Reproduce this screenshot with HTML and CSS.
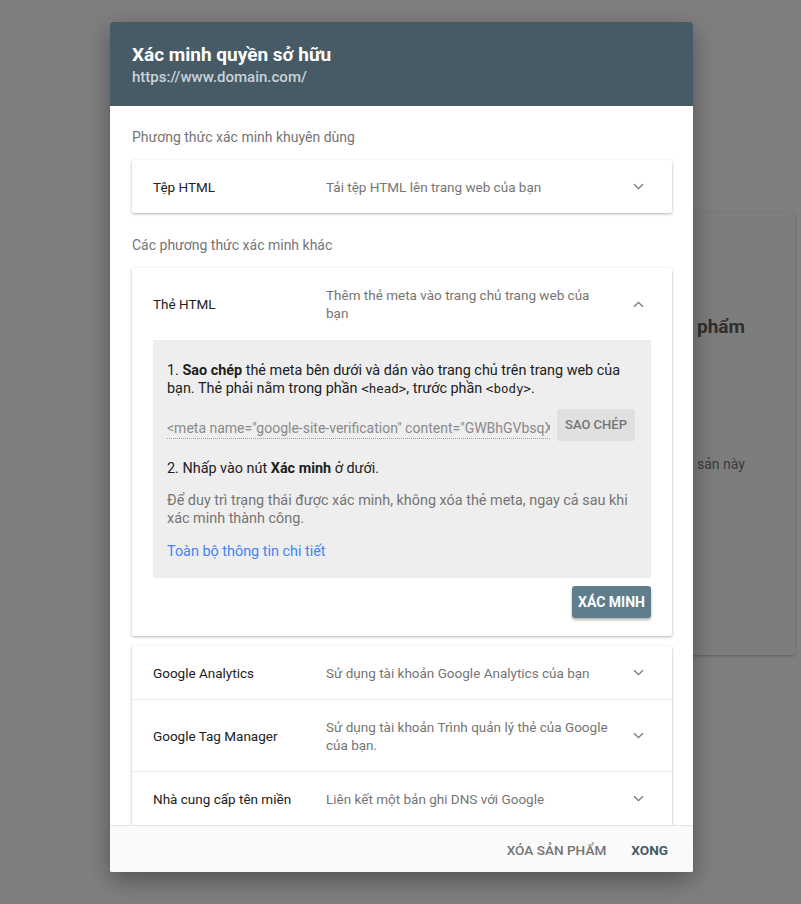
FILE: index.html
```html
<!DOCTYPE html>
<html lang="vi">
<head>
    <meta charset="UTF-8">
    <meta name="viewport" content="width=device-width, initial-scale=1.0">
    <title>Xác minh quyền sở hữu</title>
    <link rel="stylesheet" href="styles.css">
</head>
<body>
    <div class="page">
        <div class="bg-card">
            <div class="bg-title">phẩm</div>
            <div class="bg-text">sản này</div>
        </div>
    </div>

    <div class="dialog">
        <div class="dialog-header">
            <h1>Xác minh quyền sở hữu</h1>
            <div class="url">https://www.domain.com/</div>
        </div>

        <div class="dialog-body">
            <div class="section-label">Phương thức xác minh khuyên dùng</div>
            <div class="card">
                <div class="row">
                    <div class="row-title">Tệp HTML</div>
                    <div class="row-desc">Tải tệp HTML lên trang web của bạn</div>
                    <svg class="chev" viewBox="0 0 12 8"><path d="M1 1.5l5 5 5-5" /></svg>
                </div>
            </div>

            <div class="section-label">Các phương thức xác minh khác</div>
            <div class="card">
                <div class="row row-open">
                    <div class="row-title">Thẻ HTML</div>
                    <div class="row-desc">Thêm thẻ meta vào trang chủ trang web của bạn</div>
                    <svg class="chev" viewBox="0 0 12 8"><path d="M1 6.5l5-5 5 5" /></svg>
                </div>
                <div class="panel">
                    <p class="step">1. <b>Sao chép</b> thẻ meta bên dưới và dán vào trang chủ trên trang web của bạn. Thẻ phải nằm trong phần <code>&lt;head&gt;</code>, trước phần <code>&lt;body&gt;</code>.</p>
                    <div class="copy-row">
                        <div class="meta-input">&lt;meta name="google-site-verification" content="GWBhGVbsqX2bX0nY1k" /&gt;</div>
                        <button class="copy-btn">SAO CHÉP</button>
                    </div>
                    <p class="step">2. Nhấp vào nút <b>Xác minh</b> ở dưới.</p>
                    <p class="note">Để duy trì trạng thái được xác minh, không xóa thẻ meta, ngay cả sau khi xác minh thành công.</p>
                    <a class="link" href="#">Toàn bộ thông tin chi tiết</a>
                </div>
                <div class="verify-bar">
                    <button class="verify-btn">XÁC MINH</button>
                </div>
            </div>

            <div class="card card-list">
                <div class="row">
                    <div class="row-title">Google Analytics</div>
                    <div class="row-desc">Sử dụng tài khoản Google Analytics của bạn</div>
                    <svg class="chev" viewBox="0 0 12 8"><path d="M1 1.5l5 5 5-5" /></svg>
                </div>
                <div class="row">
                    <div class="row-title">Google Tag Manager</div>
                    <div class="row-desc">Sử dụng tài khoản Trình quản lý thẻ của Google của bạn.</div>
                    <svg class="chev" viewBox="0 0 12 8"><path d="M1 1.5l5 5 5-5" /></svg>
                </div>
                <div class="row">
                    <div class="row-title">Nhà cung cấp tên miền</div>
                    <div class="row-desc">Liên kết một bản ghi DNS với Google</div>
                    <svg class="chev" viewBox="0 0 12 8"><path d="M1 1.5l5 5 5-5" /></svg>
                </div>
                <div class="row">
                    <div class="row-title">Google Sites</div>
                    <div class="row-desc">Sử dụng Google Sites của bạn</div>
                    <svg class="chev" viewBox="0 0 12 8"><path d="M1 1.5l5 5 5-5" /></svg>
                </div>
            </div>
        </div>

        <div class="dialog-footer">
            <button class="text-btn">XÓA SẢN PHẨM</button>
            <button class="text-btn primary">XONG</button>
        </div>
    </div>
</body>
</html>
```

FILE: styles.css
```css
html, body {
    margin: 0;
    height: 100%;
}
body {
    font-family: Roboto, 'Noto Sans', Arial, sans-serif;
    background-color: #7f7f7f;
    overflow: hidden;
}
.page {
    height: 100%;
    padding-top: 212px;
    box-sizing: border-box;
}
.bg-card {
    margin-left: 600px;
    width: 195px;
    height: 443px;
    background-color: #7d7d7d;
    border-radius: 2px;
    box-shadow: 0 1px 3px rgba(0, 0, 0, 0.25);
    padding-left: 97px;
    box-sizing: border-box;
}
.bg-title {
    padding-top: 103px;
    font-size: 19px;
    font-weight: 700;
    color: #2f2f2f;
}
.bg-text {
    margin-top: 118px;
    font-size: 14px;
    color: #3a3a3a;
}

/* dialog */
.dialog {
    position: absolute;
    left: 110px;
    top: 22px;
    width: 583px;
    height: 850px;
    background: #fff;
    display: flex;
    flex-direction: column;
    border-radius: 2px;
    overflow: hidden;
    box-shadow: 0 8px 24px rgba(0, 0, 0, 0.35);
}
.dialog-header {
    background-color: #475b66;
    height: 84px;
    box-sizing: border-box;
    padding: 21px 22px 0;
}
.dialog-header h1 {
    margin: 0;
    font-size: 19px;
    line-height: 24px;
    font-weight: 700;
    color: #fff;
}
.url {
    font-size: 15px;
    font-weight: 500;
    line-height: 18px;
    margin-top: 1px;
    color: #c9d2d7;
}
.dialog-body {
    flex: 1;
    overflow: hidden;
    padding: 20px 21px 0 22px;
}
.section-label {
    font-size: 14px;
    line-height: 22px;
    color: #757575;
    margin-bottom: 12px;
}
.card {
    background: #fff;
    border-radius: 2px;
    box-shadow: 0 1px 3px rgba(0, 0, 0, 0.3);
    margin-bottom: 21px;
}
.card-list {
    margin-top: -11px;
}
.row {
    display: flex;
    align-items: center;
    min-height: 53px;
    padding: 0 27px 0 21px;
    font-size: 13.5px;
    border-top: 1px solid #ececec;
}
.row:first-child {
    border-top: none;
}
.card-list .row:nth-child(2) {
    min-height: 71px;
}
.row-open {
    min-height: 72px;
}
.row-title {
    width: 173px;
    flex-shrink: 0;
    color: #212121;
}
.row-desc {
    width: 282px;
    color: #757575;
    line-height: 18px;
}
.chev {
    width: 11px;
    height: 7px;
    margin-left: auto;
    margin-right: 1px;
    fill: none;
    stroke: #757575;
    stroke-width: 1.5;
}

/* expanded panel */
.panel {
    margin: 0 21px;
    background-color: #eeeeee;
    padding: 22px 15px 17px 14px;
    font-size: 14.4px;
    line-height: 18px;
    color: #212121;
}
.step {
    margin: 0;
}
.step b {
    font-weight: 700;
}
code {
    font-family: 'DejaVu Sans Mono', 'Liberation Mono', monospace;
    font-size: 12.5px;
}
.copy-row {
    display: flex;
    align-items: center;
    margin: 11px 0 19px;
}
.meta-input {
    width: 383px;
    white-space: nowrap;
    overflow: hidden;
    color: #8a8a8a;
    font-size: 14px;
    line-height: 20px;
    padding-top: 7px;
    padding-bottom: 0;
    border-bottom: 1px dotted #9e9e9e;
}
.copy-btn {
    margin-left: 7px;
    width: 78px;
    height: 32px;
    border: none;
    border-radius: 2px;
    background-color: #e0e0e0;
    color: #757575;
    font-family: inherit;
    font-size: 13px;
    line-height: 20px;
    font-weight: 500;
    padding: 0;
}
.note {
    margin: 14px 0 0;
    color: #757575;
}
.link {
    display: block;
    margin-top: 15px;
    color: #4285f4;
    text-decoration: none;
}
.verify-bar {
    display: flex;
    justify-content: flex-end;
    padding: 8px 21px 18px;
}
.verify-btn {
    width: 79px;
    height: 32px;
    border: none;
    border-radius: 3px;
    background-color: #607d8b;
    color: #fff;
    font-family: inherit;
    font-size: 14px;
    line-height: 20px;
    font-weight: 700;
    padding: 0;
    box-shadow: 0 2px 3px rgba(0, 0, 0, 0.3);
}

/* footer */
.dialog-footer {
    height: 47px;
    background-color: #fafafa;
    border-top: 1px solid #e4e4e4;
    box-sizing: border-box;
    display: flex;
    justify-content: flex-end;
    align-items: center;
    gap: 25px;
    padding-right: 25px;
    padding-top: 2px;
}
.text-btn {
    border: none;
    background: none;
    padding: 0;
    font-family: inherit;
    font-size: 13.6px;
    line-height: 24px;
    font-weight: 500;
    color: #757575;
}
.text-btn.primary {
    color: #455a64;
    font-weight: 700;
}
```
